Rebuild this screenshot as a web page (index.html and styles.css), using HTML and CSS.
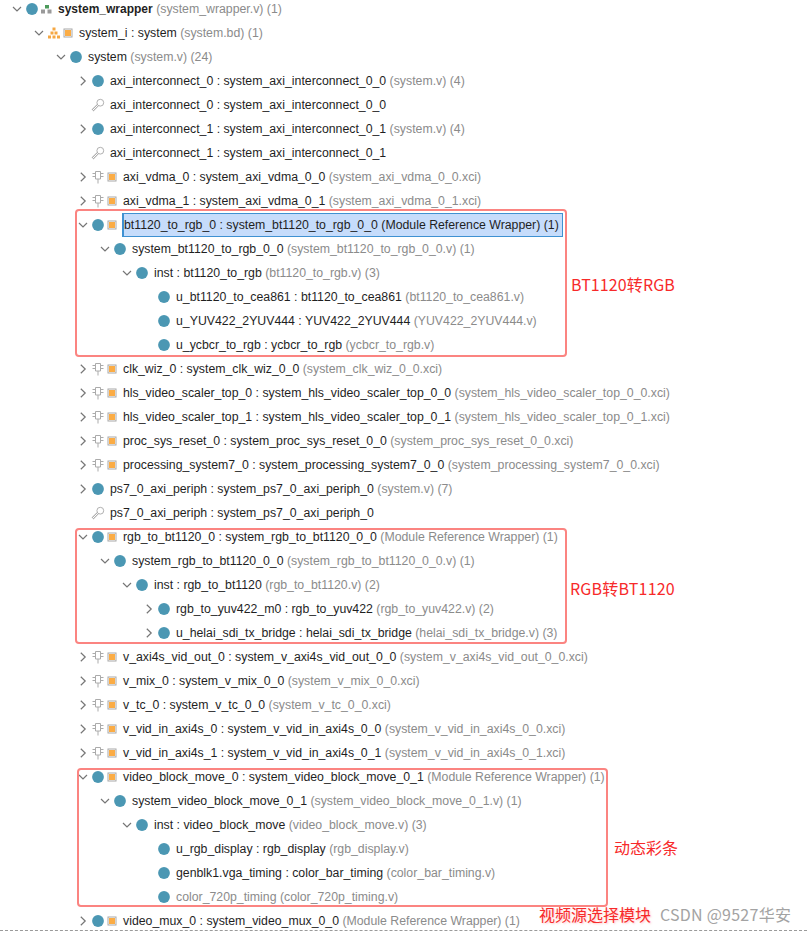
FILE: index.html
```html
<!DOCTYPE html>
<html lang="en">
<head>
<meta charset="utf-8">
<title>Hierarchy</title>
<link rel="stylesheet" href="styles.css">
</head>
<body>
<svg class="defs" width="0" height="0" aria-hidden="true">
  <symbol id="down" viewBox="0 0 12 12"><path d="M2 4l4 4 4-4" fill="none" stroke="#767676" stroke-width="1.200"/></symbol>
  <symbol id="right" viewBox="0 0 12 12"><path d="M3.800 1.800 8.200 6 3.800 10.200" fill="none" stroke="#767676" stroke-width="1.200"/></symbol>
  <symbol id="dot" viewBox="0 0 14 14"><circle cx="7" cy="7" r="5.900" fill="#4b97b3"/></symbol>
  <symbol id="sq" viewBox="0 0 14 14"><rect x="3" y="3" width="8" height="8" fill="#fff" stroke="#a8a8a8"/><rect x="4" y="4" width="6" height="6" fill="#fbac45"/></symbol>
  <symbol id="bd" viewBox="0 0 14 14"><path d="M5.500 1.500h3v3h-3zM3.500 5.500h3v3h-3zM7.500 5.500h3v3h-3zM1 9.500h3v3H1zM5.500 9.500h3v3h-3zM10 9.500h3v3h-3z" fill="#f5a742"/></symbol>
  <symbol id="net" viewBox="0 0 14 14"><path d="M6 3h4v3.500H6z" fill="#4c9a5b"/><path d="M2 7.500h4v4H2zM8.500 7.500h4v4h-4z" fill="#9a9a9a"/></symbol>
  <symbol id="chip" viewBox="0 0 14 14"><path d="M4.500 1.500h5v7.500h-5zM7 9v4.500M1.500 3.500h3M1.500 6.500h3M9.500 3.500h3M9.500 6.500h3" fill="none" stroke="#ababab"/></symbol>
  <symbol id="key" viewBox="0 0 14 14"><circle cx="9.300" cy="4.700" r="3.400" fill="none" stroke="#b0b0b0"/><path d="M6.800 7.200 1.500 12.500" fill="none" stroke="#b0b0b0" stroke-width="2.600"/><path d="M6.800 7.200 1.500 12.500" fill="none" stroke="#fff" stroke-width="1"/></symbol>
</svg>
<main class="tree" id="tree"></main>
<div class="box box-a"></div>
<div class="box box-b"></div>
<div class="box box-c"></div>
<div class="note note-a">BT1120转RGB</div>
<div class="note note-b">RGB转BT1120</div>
<div class="note note-c">动态彩条</div>
<div class="note note-d">视频源选择模块</div>
<div class="mark">CSDN @9527华安</div>
<div class="dash"></div>
<script src="tree.js"></script>
</body>
</html>
```

FILE: tree.js
```js
const rows = [
  [0,'d','dot net','system_wrapper',' (system_wrapper.v) (1)','top'],
  [1,'d','bd sq','system_i : system',' (system.bd) (1)'],
  [2,'d','dot','system',' (system.v) (24)'],
  [3,'r','dot','axi_interconnect_0 : system_axi_interconnect_0_0',' (system.v) (4)'],
  [3,'','key','axi_interconnect_0 : system_axi_interconnect_0_0',''],
  [3,'r','dot','axi_interconnect_1 : system_axi_interconnect_0_1',' (system.v) (4)'],
  [3,'','key','axi_interconnect_1 : system_axi_interconnect_0_1',''],
  [3,'r','chip sq','axi_vdma_0 : system_axi_vdma_0_0',' (system_axi_vdma_0_0.xci)'],
  [3,'r','chip sq','axi_vdma_1 : system_axi_vdma_0_1',' (system_axi_vdma_0_1.xci)'],
  [3,'d','dot sq','bt1120_to_rgb_0 : system_bt1120_to_rgb_0_0 (Module Reference Wrapper) (1)','','sel'],
  [4,'d','dot','system_bt1120_to_rgb_0_0',' (system_bt1120_to_rgb_0_0.v) (1)'],
  [5,'d','dot','inst : bt1120_to_rgb',' (bt1120_to_rgb.v) (3)'],
  [6,'','dot','u_bt1120_to_cea861 : bt1120_to_cea861',' (bt1120_to_cea861.v)'],
  [6,'','dot','u_YUV422_2YUV444 : YUV422_2YUV444',' (YUV422_2YUV444.v)'],
  [6,'','dot','u_ycbcr_to_rgb : ycbcr_to_rgb',' (ycbcr_to_rgb.v)'],
  [3,'r','chip sq','clk_wiz_0 : system_clk_wiz_0_0',' (system_clk_wiz_0_0.xci)'],
  [3,'r','chip sq','hls_video_scaler_top_0 : system_hls_video_scaler_top_0_0',' (system_hls_video_scaler_top_0_0.xci)'],
  [3,'r','chip sq','hls_video_scaler_top_1 : system_hls_video_scaler_top_0_1',' (system_hls_video_scaler_top_0_1.xci)'],
  [3,'r','chip sq','proc_sys_reset_0 : system_proc_sys_reset_0_0',' (system_proc_sys_reset_0_0.xci)'],
  [3,'r','chip sq','processing_system7_0 : system_processing_system7_0_0',' (system_processing_system7_0_0.xci)'],
  [3,'r','dot','ps7_0_axi_periph : system_ps7_0_axi_periph_0',' (system.v) (7)'],
  [3,'','key','ps7_0_axi_periph : system_ps7_0_axi_periph_0',''],
  [3,'d','dot sq','rgb_to_bt1120_0 : system_rgb_to_bt1120_0_0',' (Module Reference Wrapper) (1)'],
  [4,'d','dot','system_rgb_to_bt1120_0_0',' (system_rgb_to_bt1120_0_0.v) (1)'],
  [5,'d','dot','inst : rgb_to_bt1120',' (rgb_to_bt1120.v) (2)'],
  [6,'r','dot','rgb_to_yuv422_m0 : rgb_to_yuv422',' (rgb_to_yuv422.v) (2)'],
  [6,'r','dot','u_helai_sdi_tx_bridge : helai_sdi_tx_bridge',' (helai_sdi_tx_bridge.v) (3)'],
  [3,'r','chip sq','v_axi4s_vid_out_0 : system_v_axi4s_vid_out_0_0',' (system_v_axi4s_vid_out_0_0.xci)'],
  [3,'r','chip sq','v_mix_0 : system_v_mix_0_0',' (system_v_mix_0_0.xci)'],
  [3,'r','chip sq','v_tc_0 : system_v_tc_0_0',' (system_v_tc_0_0.xci)'],
  [3,'r','chip sq','v_vid_in_axi4s_0 : system_v_vid_in_axi4s_0_0',' (system_v_vid_in_axi4s_0_0.xci)'],
  [3,'r','chip sq','v_vid_in_axi4s_1 : system_v_vid_in_axi4s_0_1',' (system_v_vid_in_axi4s_0_1.xci)'],
  [3,'d','dot sq','video_block_move_0 : system_video_block_move_0_1',' (Module Reference Wrapper) (1)'],
  [4,'d','dot','system_video_block_move_0_1',' (system_video_block_move_0_1.v) (1)'],
  [5,'d','dot','inst : video_block_move',' (video_block_move.v) (3)'],
  [6,'','dot','u_rgb_display : rgb_display',' (rgb_display.v)'],
  [6,'','dot','genblk1.vga_timing : color_bar_timing',' (color_bar_timing.v)'],
  [6,'','dot','',' color_720p_timing (color_720p_timing.v)','mute'],
  [3,'r','dot sq','video_mux_0 : system_video_mux_0_0',' (Module Reference Wrapper) (1)']
];

const svg = (id, cls) =>
  `<svg class="${cls}"><use href="#${id}"></use></svg>`;

document.getElementById('tree').innerHTML = rows.map(([lvl, chev, icons, name, file, flag]) => {
  const arrow = chev
    ? svg(chev === 'd' ? 'down' : 'right', 'chev')
    : '<span class="chev"></span>';
  const ic = icons.split(' ').map(i => svg(i, 'ic')).join('');
  const label = `<span class="name">${name}</span><span class="file">${file.replace(/^ /, name ? ' ' : '')}</span>`;
  const sq = icons.includes('sq') ? 'has-sq' : '';
  return `<div class="row lv${lvl} ${sq} ${flag || ''}">${arrow}${ic}<span class="label">${label}</span></div>`;
}).join('');
```

FILE: styles.css
```css
* { box-sizing: border-box; }
html, body { margin: 0; height: 931px; overflow: hidden; background: #fff; }
body { position: relative; font-family: "Liberation Sans", Arial, sans-serif; }
.defs { position: absolute; }
.tree { display: flex; flex-direction: column; margin-top: -3px; }
.row { display: flex; align-items: center; height: 24px; font-size: 12.3px; white-space: pre; color: #1f1f1f; }
.lv0 { padding-left: 11px; }
.lv1 { padding-left: 33px; }
.lv2 { padding-left: 55px; }
.lv3 { padding-left: 77px; }
.lv4 { padding-left: 99px; }
.lv5 { padding-left: 121px; }
.lv6 { padding-left: 143px; }
.chev { width: 12px; height: 12px; margin-right: 2px; flex: none; }
.ic { width: 14px; height: 14px; flex: none; }
.label { margin-left: 5px; }
.has-sq .label { margin-left: 4px; }
.file { color: #8b8b8b; }
.top .name { font-weight: bold; font-size: 12px; }
.sel .label { margin-left: 3px; height: 24px; line-height: 22px; width: 441px; background: #c6dcfb; border: 1px solid #3f91d2; border-left-width: 2px; }
.box { position: absolute; border: 2px solid #fb8481; border-radius: 4px; }
.box-a { left: 75px; top: 209px; width: 492px; height: 148px; }
.box-b { left: 75px; top: 528px; width: 492px; height: 116px; }
.box-c { left: 77px; top: 768px; width: 531px; height: 139px; }
.note { position: absolute; color: #f72a2a; font-family: "Noto Sans CJK SC", "Noto Sans", sans-serif; font-size: 16px; line-height: 20px; white-space: nowrap; }
.note-a { left: 571px; top: 274px; letter-spacing: 0.1px; }
.note-b { left: 570px; top: 578px; letter-spacing: 0.2px; }
.note-c { left: 614px; top: 837px; }
.note-d { left: 539px; top: 904px; text-shadow: 1px 1px 2px rgba(255, 100, 100, 0.35); }
.mark { position: absolute; left: 660px; top: 904px; color: #a3a3a3; font-family: "Noto Sans CJK SC", "Noto Sans", sans-serif; font-size: 16px; line-height: 20px; letter-spacing: 0.25px; white-space: nowrap; }
.dash { position: absolute; left: 0; right: 0; top: 930px; border-top: 1px dashed #9a9a9a; }
```
